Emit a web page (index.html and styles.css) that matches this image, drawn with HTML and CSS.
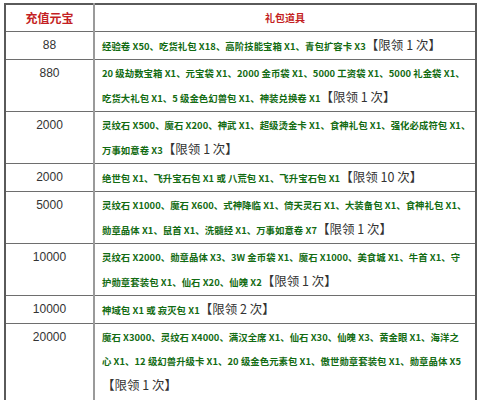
FILE: index.html
```html
<!DOCTYPE html>
<html lang="zh-CN">
<head>
<meta charset="utf-8">
<title>充值礼包</title>
<link rel="stylesheet" href="styles.css">
</head>
<body>
<table class="gift">
  <tr class="head">
    <th class="c1">充值元宝</th>
    <th class="c2">礼包道具</th>
  </tr>
  <tr class="r1">
    <td class="amt">88</td>
    <td class="items">经验卷 X50、吃货礼包 X18、高阶技能宝箱 X1、青包扩容卡 X3<span class="lim">【限领 1 次】</span></td>
  </tr>
  <tr class="r2">
    <td class="amt">880</td>
    <td class="items">20 级劫数宝箱 X1、元宝袋 X1、2000 金币袋 X1、5000 工资袋 X1、5000 礼金袋 X1、<br>吃货大礼包 X1、5 级金色幻兽包 X1、神装兑换卷 X1<span class="lim">【限领 1 次】</span></td>
  </tr>
  <tr class="r2">
    <td class="amt">2000</td>
    <td class="items">灵纹石 X500、魔石 X200、神武 X1、超级烫金卡 X1、食神礼包 X1、强化必成符包 X1、<br>万事如意卷 X3<span class="lim">【限领 1 次】</span></td>
  </tr>
  <tr class="r1">
    <td class="amt">2000</td>
    <td class="items">绝世包 X1、飞升宝石包 X1 或 八荒包 X1、飞升宝石包 X1<span class="lim">【限领 10 次】</span></td>
  </tr>
  <tr class="r2">
    <td class="amt">5000</td>
    <td class="items">灵纹石 X1000、魔石 X600、式神降临 X1、倚天灵石 X1、大装备包 X1、食神礼包 X1、<br>勋章晶体 X1、鼠首 X1、洗髓经 X1、万事如意卷 X7<span class="lim">【限领 1 次】</span></td>
  </tr>
  <tr class="r2">
    <td class="amt">10000</td>
    <td class="items">灵纹石 X2000、勋章晶体 X3、3W 金币袋 X1、魔石 X1000、美食城 X1、牛首 X1、守<br>护勋章套装包 X1、仙石 X20、仙魄 X2<span class="lim">【限领 1 次】</span></td>
  </tr>
  <tr class="r1">
    <td class="amt">10000</td>
    <td class="items">神域包 X1 或 寂灭包 X1<span class="lim">【限领 2 次】</span></td>
  </tr>
  <tr class="r3">
    <td class="amt">20000</td>
    <td class="items">魔石 X3000、灵纹石 X4000、满汉全席 X1、仙石 X30、仙魄 X3、黄金眼 X1、海洋之<br>心 X1、12 级幻兽升级卡 X1、20 级金色元素包 X1、傲世勋章套装包 X1、勋章晶体 X5<br><span class="lim">【限领 1 次】</span></td>
  </tr>
</table>
</body>
</html>
```
FILE: styles.css
```css
html, body {
  margin: 0;
  padding: 0;
  background: #ffffff;
}

body {
  width: 480px;
  height: 400px;
  overflow: hidden;
  font-family: "Noto Sans CJK SC", "Liberation Sans", sans-serif;
}

.gift {
  margin: 3px 0 0 4px;
  width: 473px;
  border-collapse: collapse;
  border: 2px solid #5a5a5a;
  table-layout: fixed;
}

.gift th,
.gift td {
  border: 1px solid #6e6e6e;
  padding: 1px 0;
  line-height: 24px;
}

.gift .c1,
.gift .amt {
  width: 87px;
  border-right: 2px solid #9a9a9a;
}

.head th {
  height: 24px;
  font-weight: bold;
  color: #c41f24;
  text-align: center;
  vertical-align: middle;
}

.head .c1 {
  font-size: 12px;
}

.head .c2 {
  font-size: 10px;
}

.amt {
  text-align: center;
  vertical-align: top;
  font-family: "Liberation Sans", Arial, sans-serif;
  font-size: 12px;
  color: #333333;
}

.items {
  padding-left: 7px !important;
  vertical-align: top;
  white-space: nowrap;
  overflow: hidden;
  font-size: 9.4px;
  letter-spacing: 0.05px;
  font-weight: bold;
  color: #126b12;
}

.r3 .items {
  padding-bottom: 5px;
}

.lim {
  font-size: 12.5px;
  letter-spacing: 0;
  font-weight: normal;
  color: #333333;
}
```
